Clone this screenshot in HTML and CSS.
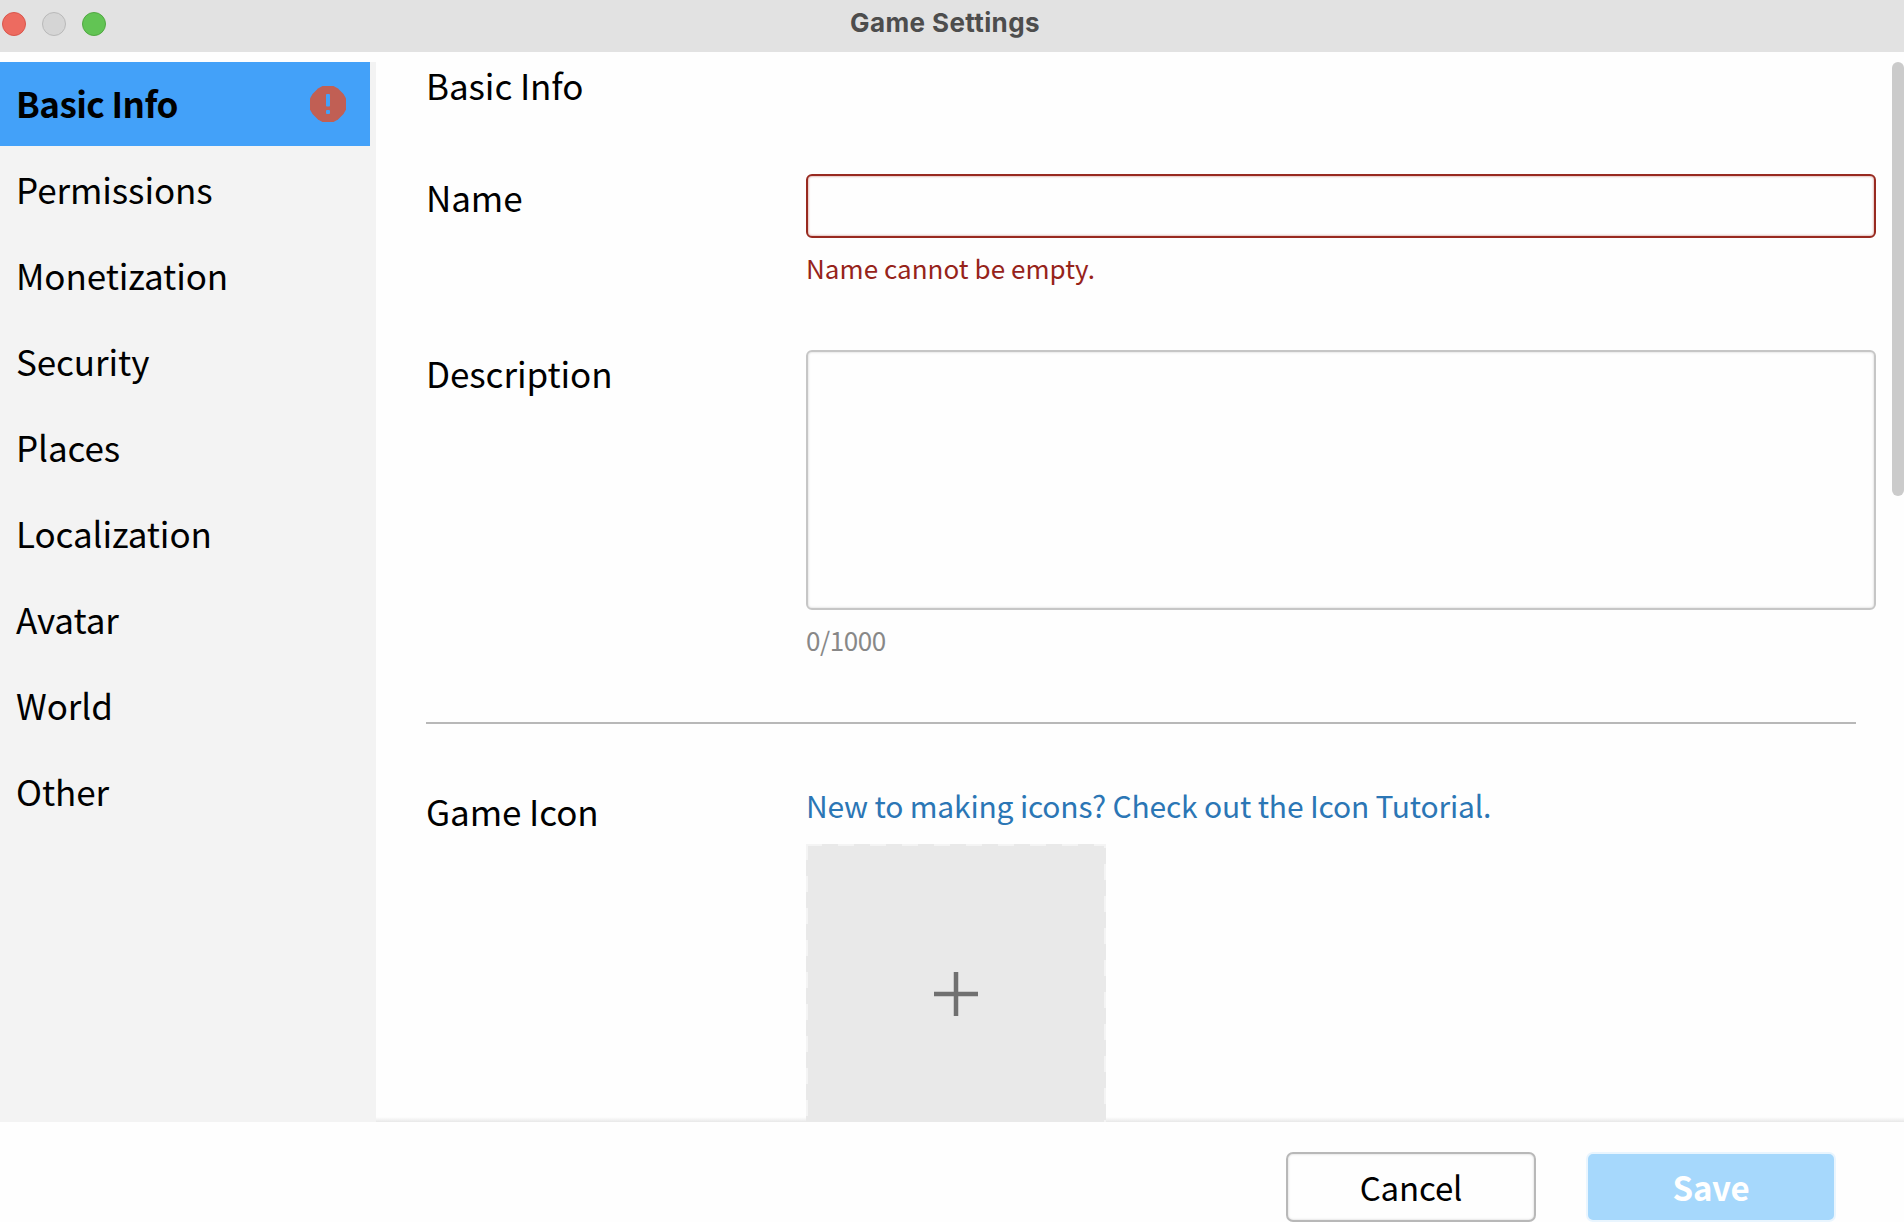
FILE: index.html
```html
<!DOCTYPE html>
<html lang="en">
<head>
<meta charset="utf-8">
<title>Game Settings</title>
<link rel="stylesheet" href="styles.css">
</head>
<body>
<div class="window">
  <header class="titlebar">
    <div class="lights">
      <span class="light close"></span>
      <span class="light minimize"></span>
      <span class="light zoom"></span>
    </div>
    <h1 class="title">Game Settings</h1>
  </header>
  <div class="body">
    <nav class="sidebar">
      <a class="item active"><span>Basic Info</span>
        <svg class="alert" viewBox="0 0 36 36" width="36" height="36"><path d="M12.500 0H23.500L28 2.500L33.500 8L36 12.500V23.500L33.500 28L28 33.500L23.500 36H12.500L8 33.500L2.500 28L0 23.500V12.500L2.500 8L8 2.500Z" fill="#c15f54"/><rect x="16" y="8" width="4" height="12.500" rx="1" fill="#43a1f9"/><rect x="16" y="24" width="4" height="4" rx="1" fill="#43a1f9"/></svg>
      </a>
      <a class="item">Permissions</a>
      <a class="item">Monetization</a>
      <a class="item">Security</a>
      <a class="item">Places</a>
      <a class="item">Localization</a>
      <a class="item">Avatar</a>
      <a class="item">World</a>
      <a class="item">Other</a>
    </nav>
    <main class="content">
      <h2 class="heading">Basic Info</h2>
      <section class="row name-row">
        <label class="label" for="name">Name</label>
        <div class="field">
          <input class="input invalid" id="name" type="text">
          <p class="note error">Name cannot be empty.</p>
        </div>
      </section>
      <section class="row desc-row">
        <label class="label" for="desc">Description</label>
        <div class="field">
          <textarea class="input area" id="desc"></textarea>
          <p class="note count">0/1000</p>
        </div>
      </section>
      <hr class="divider">
      <section class="row icon-row">
        <span class="label">Game Icon</span>
        <div class="field">
          <a class="link">New to making icons? Check out the Icon Tutorial.</a>
          <div class="upload">
            <svg class="frame" width="300" height="300" viewBox="0 0 300 300"><path d="M0 1H300M299 -12V300M1 0V300" fill="none" stroke="#f4f4f4" stroke-width="2" stroke-dasharray="16 16"/></svg>
            <svg class="plus" width="46" height="46" viewBox="0 0 46 46"><path d="M23 1V45M1 23H45" stroke="#707070" stroke-width="4.500"/></svg>
          </div>
        </div>
      </section>
    </main>
    <div class="scrollbar"><div class="thumb"></div></div>
  </div>
  <footer class="footer">
    <button class="btn cancel">Cancel</button>
    <button class="btn save">Save</button>
  </footer>
</div>
</body>
</html>
```
FILE: styles.css
```css
* { box-sizing: border-box; }
body { margin: 0; background: #fefefe; color: #000; font-family: "Noto Sans CJK SC", "Noto Sans", sans-serif; font-size: 35px; letter-spacing: -0.08px; }
h1, h2, p { margin: 0; font-weight: 400; }
.window { width: 1904px; height: 1222px; overflow: hidden; display: flex; flex-direction: column; }
.titlebar { height: 52px; flex: none; background: #e2e2e2; display: grid; grid-template-columns: 1fr auto 1fr; }
.lights { display: flex; gap: 16px; padding: 12px 0 0 2px; }
.light { width: 24px; height: 24px; border-radius: 50%; border: 1px solid; }
.close { background: #ed6b60; border-color: #d9564c; }
.minimize { background: #d5d5d5; border-color: #b9b9b9; }
.zoom { background: #62c454; border-color: #51a842; }
.title { grid-column: 2; padding-right: 14px; font: 700 26px/46px Inter, sans-serif; letter-spacing: 0.38px; color: #4d4d4d; margin-right: -13px; margin-left: -13px; }
.body { display: flex; height: 1060px; margin-top: 10px; flex: none; background: linear-gradient(to top, #e8e8e8, #fefefe 5px); }
.sidebar { width: 376px; flex: none; background: #f3f3f3; display: flex; flex-direction: column; gap: 2px; padding-right: 6px; }
.item { height: 84px; padding: 0 24px 2px 16px; display: flex; align-items: center; justify-content: space-between; line-height: 52px; }
.item.active { background: #43a1f9; font-weight: 700; letter-spacing: -0.55px; }
.alert { display: block; margin-top: 2px; }
.content { flex: 1; min-width: 0; margin-top: -6px; padding: 6px 16px 0 50px; overflow: hidden; }
.heading { font-size: 35px; line-height: 46px; height: 108px; }
.row { display: grid; grid-template-columns: 380px 1070px; }
.name-row { height: 176px; }
.desc-row { height: 376px; }
.label { line-height: 52px; padding-top: 1px; }
.field { padding-top: 4px; display: flex; flex-direction: column; align-items: flex-start; }
.input { display: block; width: 1070px; height: 64px; margin: 0; padding: 8px 12px; border: 2px solid #c6c6c6; border-radius: 6px; outline: 0; resize: none; background: #fefefe; font: inherit; box-shadow: inset 0 0 2px 0.5px #ddd; }
.invalid { border-color: #982a20; box-shadow: inset 0 0 2px 0.5px #d9a5a0; }
.area { height: 260px; }
.note { font-size: 26px; line-height: 40px; margin-top: 10px; }
.error { color: #96231a; letter-spacing: 0.05px; }
.count { color: #888; letter-spacing: -0.45px; }
.divider { width: 1430px; height: 2px; margin: 0; border: 0; background: #b8b8b8; }
.icon-row { padding-top: 60px; }
.icon-row .field { padding-top: 0; }
.link { font-size: 30px; line-height: 42px; letter-spacing: -0.18px; color: #2b76b5; white-space: nowrap; }
.upload { position: relative; width: 300px; height: 300px; margin-top: 18px; background: #e9e9e9; display: grid; place-items: center; }
.frame { position: absolute; inset: 0; }
.scrollbar { width: 12px; flex: none; }
.thumb { height: 434px; border-radius: 6px; background: #cbcbcb; }
.footer { height: 100px; padding: 30px 68px 0 0; display: flex; justify-content: flex-end; gap: 50px; }
.btn { width: 250px; height: 70px; padding: 0; border-radius: 7px; font: 400 33px/52px "Noto Sans CJK SC", sans-serif; letter-spacing: -0.15px; }
.cancel { background: #fefefe; border: 2px solid #b8b8b8; box-shadow: inset 0 0 2px 0.5px #ddd; color: #000; }
.save { background: #a6d8fc; border: 2px solid #e9f5fe; color: #fff; font-weight: 700; letter-spacing: -0.3px; }
```
